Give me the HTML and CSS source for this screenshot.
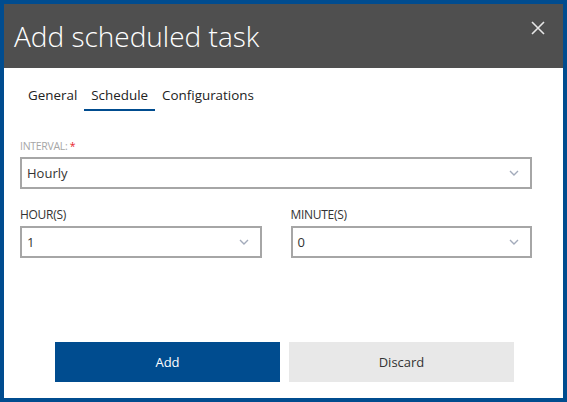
FILE: index.html
```html
<!DOCTYPE html>
<html>
<head>
<meta charset="utf-8">
<link rel="stylesheet" href="styles.css">
</head>
<body>
<div class="dialog">
  <div class="header">
    <h1 class="title">Add scheduled task</h1>
    <button class="close" aria-label="Close">
      <svg width="14" height="14" viewBox="0 0 14 14"><path d="M1 1L13 13M13 1L1 13" stroke="#e6e6e6" stroke-width="1.6" fill="none"/></svg>
    </button>
  </div>
  <div class="body">
    <div class="tabs">
      <div class="tab">General</div>
      <div class="tab active">Schedule</div>
      <div class="tab">Configurations</div>
    </div>
    <div class="form">
      <div class="field">
        <label class="label muted">INTERVAL: <span class="req">*</span></label>
        <div class="select"><span>Hourly</span><svg class="chev" width="10" height="6" viewBox="0 0 10 6"><path d="M1 1L5 5L9 1" stroke="#a3abbb" stroke-width="1.4" fill="none"/></svg></div>
      </div>
      <div class="row">
        <div class="field">
          <label class="label">HOUR(S)</label>
          <div class="select"><span>1</span><svg class="chev" width="10" height="6" viewBox="0 0 10 6"><path d="M1 1L5 5L9 1" stroke="#a3abbb" stroke-width="1.4" fill="none"/></svg></div>
        </div>
        <div class="field">
          <label class="label">MINUTE(S)</label>
          <div class="select"><span>0</span><svg class="chev" width="10" height="6" viewBox="0 0 10 6"><path d="M1 1L5 5L9 1" stroke="#a3abbb" stroke-width="1.4" fill="none"/></svg></div>
        </div>
      </div>
    </div>
    <div class="footer">
      <button class="btn primary">Add</button>
      <button class="btn secondary">Discard</button>
    </div>
  </div>
</div>
</body>
</html>
```

FILE: styles.css
```css
html, body {
  margin: 0;
  padding: 0;
  height: 100%;
}
body {
  font-family: "Open Sans", "Noto Sans", sans-serif;
  color: #333;
}
.dialog {
  box-sizing: border-box;
  width: 567px;
  height: 402px;
  border: 4px solid #004c8f;
  display: flex;
  flex-direction: column;
  background: #fff;
}
.header {
  height: 64px;
  background: #4f4f4f;
  display: flex;
  align-items: center;
  justify-content: space-between;
  padding: 0 18px 0 10px;
  flex-shrink: 0;
}
.title {
  margin: 0;
  font-size: 28px;
  font-weight: 300;
  color: #fff;
}
.close {
  background: none;
  border: 0;
  padding: 0;
  display: flex;
  margin-top: -17px;
}
.body {
  flex: 1;
  display: flex;
  flex-direction: column;
  padding: 0 31px 16px 16px;
}
.tabs {
  display: flex;
  margin-top: 12px;
  margin-left: 1px;
}
.tab {
  font-size: 13.4px;
  line-height: 19px;
  padding: 6px 7px 4px;
  border-bottom: 2px solid transparent;
  color: #222;
}
.tab.active {
  border-bottom-color: #004c8f;
}
.form {
  margin-top: 27px;
  display: flex;
  flex-direction: column;
  gap: 18px;
}
.field {
  display: flex;
  flex-direction: column;
  flex: 1;
}
.row {
  display: flex;
  gap: 29px;
}
.label {
  font-size: 12px;
  line-height: 16px;
  margin-bottom: 3px;
  color: #333;
  letter-spacing: -0.3px;
}
.label.muted {
  font-size: 10.5px;
  color: #a6a6a6;
  margin-bottom: 3px;
}
.req {
  color: #e8262a;
}
.select {
  box-sizing: border-box;
  height: 32px;
  border: 2px solid #a6a6a6;
  display: flex;
  align-items: center;
  justify-content: space-between;
  padding: 0 11px 0 5px;
  font-size: 13px;
  color: #333;
}
.footer {
  margin-top: auto;
  display: flex;
  gap: 9px;
  padding-left: 35px;
}
.btn {
  width: 225px;
  height: 40px;
  border: 0;
  font-family: "Open Sans", "Noto Sans", sans-serif;
  font-size: 13px;
  padding: 0;
}
.btn.primary {
  background: #004c8f;
  color: #fff;
}
.btn.secondary {
  background: #e8e8e8;
  color: #333;
}
```
